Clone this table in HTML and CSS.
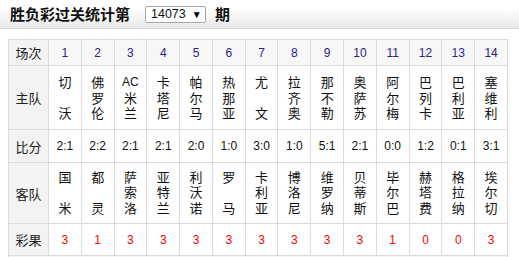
FILE: index.html
```html
<!DOCTYPE html>
<html lang="zh">
<head>
<meta charset="utf-8">
<title>胜负彩过关统计</title>
<link rel="stylesheet" href="styles.css">
</head>
<body>
<div class="topbar">
  <span class="title">胜负彩过关统计第</span>
  <span class="select"><span class="sel-val">14073</span><span class="sel-arrow">▼</span></span>
  <span class="title">期</span>
</div>
<div class="content">
  <table class="stats">
    <tr class="r-head">
      <td class="label">场次</td>
      <td class="num">1</td><td class="num">2</td><td class="num">3</td><td class="num">4</td><td class="num">5</td><td class="num">6</td><td class="num">7</td>
      <td class="num">8</td><td class="num">9</td><td class="num">10</td><td class="num">11</td><td class="num">12</td><td class="num">13</td><td class="num">14</td>
    </tr>
    <tr class="r-home">
      <td class="label">主队</td>
      <td class="team"><span>切</span><span></span><span>沃</span></td>
      <td class="team"><span>佛</span><span>罗</span><span>伦</span></td>
      <td class="team"><span class="latin">AC</span><span>米</span><span>兰</span></td>
      <td class="team"><span>卡</span><span>塔</span><span>尼</span></td>
      <td class="team"><span>帕</span><span>尔</span><span>马</span></td>
      <td class="team"><span>热</span><span>那</span><span>亚</span></td>
      <td class="team"><span>尤</span><span></span><span>文</span></td>
      <td class="team"><span>拉</span><span>齐</span><span>奥</span></td>
      <td class="team"><span>那</span><span>不</span><span>勒</span></td>
      <td class="team"><span>奥</span><span>萨</span><span>苏</span></td>
      <td class="team"><span>阿</span><span>尔</span><span>梅</span></td>
      <td class="team"><span>巴</span><span>列</span><span>卡</span></td>
      <td class="team"><span>巴</span><span>利</span><span>亚</span></td>
      <td class="team"><span>塞</span><span>维</span><span>利</span></td>
    </tr>
    <tr class="r-score">
      <td class="label">比分</td>
      <td class="score">2:1</td><td class="score">2:2</td><td class="score">2:1</td><td class="score">2:1</td><td class="score">2:0</td><td class="score">1:0</td><td class="score">3:0</td>
      <td class="score">1:0</td><td class="score">5:1</td><td class="score">2:1</td><td class="score">0:0</td><td class="score">1:2</td><td class="score">0:1</td><td class="score">3:1</td>
    </tr>
    <tr class="r-away">
      <td class="label">客队</td>
      <td class="team"><span>国</span><span></span><span>米</span></td>
      <td class="team"><span>都</span><span></span><span>灵</span></td>
      <td class="team"><span>萨</span><span>索</span><span>洛</span></td>
      <td class="team"><span>亚</span><span>特</span><span>兰</span></td>
      <td class="team"><span>利</span><span>沃</span><span>诺</span></td>
      <td class="team"><span>罗</span><span></span><span>马</span></td>
      <td class="team"><span>卡</span><span>利</span><span>亚</span></td>
      <td class="team"><span>博</span><span>洛</span><span>尼</span></td>
      <td class="team"><span>维</span><span>罗</span><span>纳</span></td>
      <td class="team"><span>贝</span><span>蒂</span><span>斯</span></td>
      <td class="team"><span>毕</span><span>尔</span><span>巴</span></td>
      <td class="team"><span>赫</span><span>塔</span><span>费</span></td>
      <td class="team"><span>格</span><span>拉</span><span>纳</span></td>
      <td class="team"><span>埃</span><span>尔</span><span>切</span></td>
    </tr>
    <tr class="r-result">
      <td class="label">彩果</td>
      <td class="result">3</td><td class="result">1</td><td class="result">3</td><td class="result">3</td><td class="result">3</td><td class="result">3</td><td class="result">3</td>
      <td class="result">3</td><td class="result">3</td><td class="result">3</td><td class="result">1</td><td class="result">0</td><td class="result">0</td><td class="result">3</td>
    </tr>
  </table>
  <div class="foot"></div>
</div>
</body>
</html>
```
FILE: styles.css
```css
html, body {
  margin: 0;
  padding: 0;
  background: #fff;
  font-family: "Liberation Sans", "Noto Sans CJK SC", sans-serif;
  color: #000;
}

.topbar {
  height: 28px;
  display: flex;
  align-items: center;
  padding-left: 10px;
  background: linear-gradient(#ffffff, #ffffff 30%, #e9e9e9);
  border-bottom: 1px solid #d9d9d9;
  box-sizing: content-box;
}

.title {
  font-family: "Noto Sans CJK SC", sans-serif;
  font-weight: 700;
  font-size: 15px;
  line-height: 18px;
  color: #111;
}

.select {
  margin-left: 15px;
  margin-right: 9px;
  width: 61px;
  height: 17px;
  box-sizing: border-box;
  border: 1px solid #a6a6a6;
  border-radius: 2px;
  background: #fff;
  display: flex;
  align-items: center;
  padding-left: 5px;
  font-size: 12.5px;
  color: #111;
}

.sel-val {
  line-height: 15px;
}

.sel-arrow {
  font-size: 10px;
  margin-left: 6px;
  line-height: 15px;
  color: #000;
}

.content {
  padding: 10px 8px 0 8px;
}

.stats {
  width: 500px;
  border-collapse: collapse;
  table-layout: fixed;
}

.stats td {
  border: 1px solid #dcdcdc;
  text-align: center;
  vertical-align: middle;
  padding: 0;
}

.stats td.label {
  width: 39px;
  background: #f3f3f3;
  font-size: 13px;
  color: #222;
}

.r-head td {
  height: 25px;
  background: #f7f7f7;
}

.r-home td {
  height: 61px;
}

.r-score td {
  height: 32px;
}

.r-away td {
  height: 60px;
}

.r-result td {
  height: 31px;
}

.num {
  font-size: 12px;
  color: #2e1a8c;
}

.score {
  font-size: 12px;
  color: #111;
}

.result {
  font-size: 12px;
  color: #f00;
}

.team span {
  display: block;
  height: 15.5px;
  line-height: 15.5px;
  font-size: 13px;
  color: #111;
}

.team span.latin {
  font-size: 12px;
}

.r-home .team {
  padding-top: 2px;
}

.foot {
  width: 500px;
  height: 10px;
  box-sizing: border-box;
  background: #f5f5f5;
  border-left: 1px solid #dcdcdc;
  border-right: 1px solid #dcdcdc;
}
```
